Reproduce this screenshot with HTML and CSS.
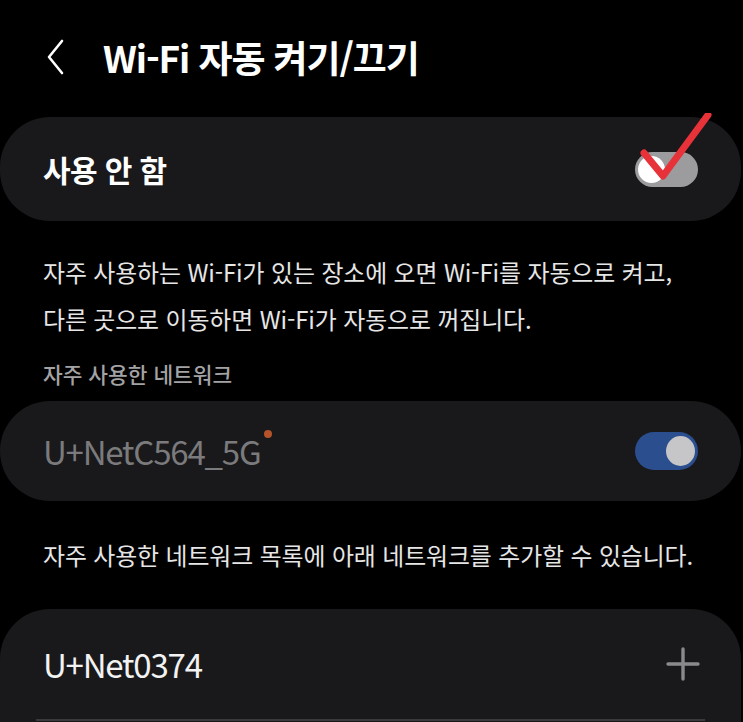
FILE: index.html
```html
<!DOCTYPE html>
<html lang="ko">
<head>
    <meta charset="UTF-8">
    <meta name="viewport" content="width=device-width, initial-scale=1.0">
    <title>Wi-Fi 자동 켜기/끄기</title>
    <link rel="stylesheet" href="styles.css">
</head>
<body>

    <header class="top-bar">
        <svg class="back" width="20" height="36" viewBox="0 0 20 36">
            <path d="M16 2 L3 18 L16 34" fill="none" stroke="#fff" stroke-width="2.6" stroke-linecap="round" stroke-linejoin="round"/>
        </svg>
        <h1>Wi-Fi 자동 켜기/끄기</h1>
    </header>

    <div class="card main-switch">
        <span class="label">사용 안 함</span>
        <div class="toggle off">
            <span class="thumb"></span>
        </div>
        <svg class="check" width="80" height="80" viewBox="0 0 80 80">
            <path d="M8 40 L27 63 L72 2" fill="none" stroke="#e8323a" stroke-width="7" stroke-linecap="round" stroke-linejoin="round"/>
        </svg>
    </div>

    <p class="desc">자주 사용하는 Wi-Fi가 있는 장소에 오면 Wi-Fi를 자동으로 켜고,<br>다른 곳으로 이동하면 Wi-Fi가 자동으로 꺼집니다.</p>

    <h2 class="section-title">자주 사용한 네트워크</h2>

    <div class="card dimmed">
        <span class="label net">U+NetC564_5G<i class="dot"></i></span>
        <div class="toggle on">
            <span class="thumb"></span>
        </div>
    </div>

    <p class="desc single">자주 사용한 네트워크 목록에 아래 네트워크를 추가할 수 있습니다.</p>

    <div class="card list">
        <div class="row">
            <span class="label net">U+Net0374</span>
            <svg class="plus" width="34" height="34" viewBox="0 0 34 34">
                <path d="M17 2 V32 M2 17 H32" stroke="#8a8a8c" stroke-width="3.4" stroke-linecap="round"/>
            </svg>
        </div>
        <div class="divider"></div>
    </div>

</body>
</html>
```

FILE: styles.css
```css
body {
    margin: 0;
    padding: 0;
    background-color: #000;
    color: #fff;
    font-family: "Noto Sans CJK KR", "Noto Sans", sans-serif;
    width: 743px;
    height: 722px;
    overflow: hidden;
}
.top-bar {
    display: flex;
    align-items: center;
    height: 117px;
    padding-left: 46px;
    box-sizing: border-box;
    padding-bottom: 4px;
}
.top-bar .back {
    margin-right: 37px;
}
.top-bar h1 {
    margin: 0;
    font-size: 37px;
    font-weight: 700;
    letter-spacing: -1.1px;
}
.card {
    position: relative;
    background-color: #19191b;
    border-radius: 50px;
    width: 741px;
    box-sizing: border-box;
    display: flex;
    align-items: center;
    justify-content: space-between;
    padding: 0 43px;
}
.label {
    font-size: 30px;
    font-weight: 500;
    letter-spacing: -0.6px;
}
.main-switch {
    height: 104px;
}
.main-switch .label {
    font-weight: 700;
}
.toggle {
    position: relative;
    width: 63px;
    height: 35px;
    border-radius: 18px;
}
.toggle .thumb {
    position: absolute;
    top: 4px;
    width: 27px;
    height: 27px;
    border-radius: 50%;
}
.toggle.off {
    background-color: #9c9c9e;
}
.toggle.off .thumb {
    left: 3px;
    background-color: #fff;
}
.toggle.on {
    background-color: #2b4e8e;
    height: 38px;
    border-radius: 19px;
}
.toggle.on .thumb {
    right: 3px;
    top: 4px;
    width: 29px;
    height: 30px;
    background-color: #c6c6c8;
}
.check {
    position: absolute;
    left: 636px;
    top: -4px;
}
.desc {
    margin: 27px 0 0 43px;
    font-size: 23.9px;
    line-height: 47px;
    color: #e6e6e6;
    letter-spacing: -0.1px;
}
.desc.single {
    margin-top: 30px;
    margin-bottom: 31px;
}
.section-title {
    margin: 16px 0 12px 43px;
    font-size: 21.4px;
    font-weight: 500;
    color: #a3a3a5;
    letter-spacing: 0;
}
.dimmed {
    height: 100px;
}
.dimmed .net {
    color: #7b7b7d;
}
.net {
    position: relative;
    font-size: 33px;
    font-weight: 400;
    letter-spacing: -1.2px;
}
.dot {
    position: absolute;
    right: -12px;
    top: 3px;
    width: 8px;
    height: 8px;
    border-radius: 50%;
    background-color: #b5532a;
}
.list {
    display: block;
    height: 140px;
    padding: 0;
    border-radius: 50px 50px 0 0;
}
.row {
    display: flex;
    align-items: center;
    justify-content: space-between;
    height: 110px;
    padding: 0 41px 0 43px;
}
.row .net {
    color: #f2f2f2;
}
.divider {
    margin: 0 36px;
    height: 2px;
    background-color: #3a3a3c;
}
```
